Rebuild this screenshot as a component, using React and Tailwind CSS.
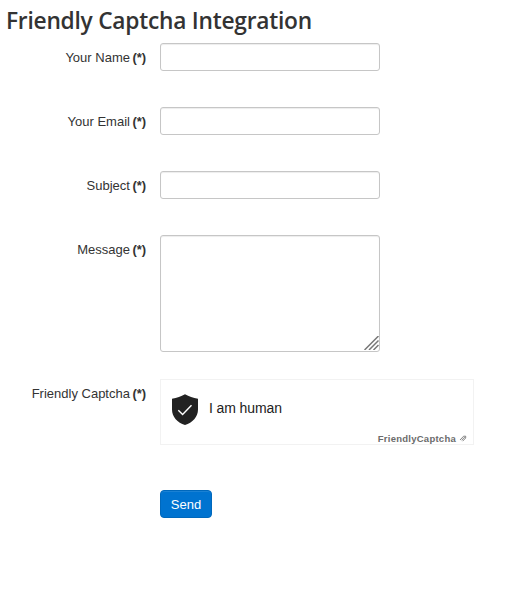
import { useState } from 'react';

const inputClass =
  'block w-[220px] rounded-[3px] border border-[#c6c6c6] bg-white px-1.5 text-[13px] text-[#555] shadow-[inset_0_1px_1px_rgba(0,0,0,0.075)] outline-none';

function Row({ label, htmlFor, className = '', children }) {
  return (
    <div className={`flex items-start ${className}`}>
      <label
        htmlFor={htmlFor}
        className="mr-3.5 w-[146px] shrink-0 pt-1.5 text-right text-[13px] leading-[18px] whitespace-nowrap"
      >
        {label} <strong className="-ml-px font-bold tracking-[-0.1px]">(*)</strong>
      </label>
      {children}
    </div>
  );
}

function ShieldIcon() {
  return (
    <svg width="26" height="31" viewBox="0 0 26 31" className="shrink-0">
      <path d="M13 0.300C17 2.400 21 3.800 26 4.800v10.700C26 23 20.500 28.800 13 31 5.500 28.800 0 23 0 15.500V4.800C5 3.800 9 2.400 13 0.300Z" fill="#222" />
      <path d="m6.300 16.300 4.300 4.300 8.900-9.400" fill="none" stroke="#fff" strokeWidth="1.400" />
    </svg>
  );
}

function LinkMark() {
  return (
    <svg width="8" height="7" viewBox="0 0 8 7" fill="none" stroke="#666" strokeWidth="0.800">
      <path d="M1 5 4.600 1.200H6.700V3L3.600 6.200M2.600 5.300 5.800 2" />
    </svg>
  );
}

function ResizeGrip() {
  return (
    <svg
      width="15"
      height="14"
      viewBox="0 0 15 14"
      className="pointer-events-none absolute right-[1px] bottom-[2px]"
      stroke="#777"
      strokeWidth="1.500"
    >
      <path d="M0.500 14 14.500 0M5 14 14.500 4.500M9.500 14 14.500 9" />
    </svg>
  );
}

export default function App() {
  const [form, setForm] = useState({ name: '', email: '', subject: '', message: '' });

  const update = (e) => setForm({ ...form, [e.target.name]: e.target.value });

  return (
    <form
      onSubmit={(e) => e.preventDefault()}
      className="min-h-screen bg-white font-['Liberation_Sans',Arial,sans-serif] text-[#333]"
    >
      <h1 className="h-[43px] pt-[3px] pl-1.5 font-['Open_Sans',sans-serif] text-[22.75px] leading-9 font-semibold tracking-[-0.25px] whitespace-nowrap">
        Friendly Captcha Integration
      </h1>

      <Row label="Your Name" htmlFor="name" className="mb-9">
        <input id="name" name="name" value={form.name} onChange={update} className={`${inputClass} h-7`} />
      </Row>
      <Row label="Your Email" htmlFor="email" className="mb-9">
        <input id="email" name="email" value={form.email} onChange={update} className={`${inputClass} h-7`} />
      </Row>
      <Row label="Subject" htmlFor="subject" className="mb-9">
        <input id="subject" name="subject" value={form.subject} onChange={update} className={`${inputClass} h-7`} />
      </Row>
      <Row label="Message" htmlFor="message" className="mb-[27px]">
        <div className="relative">
          <textarea
            id="message"
            name="message"
            value={form.message}
            onChange={update}
            className={`${inputClass} h-[117px] resize-none`}
          />
          <ResizeGrip />
        </div>
      </Row>

      {/* Captcha widget */}
      <Row label="Friendly Captcha" className="mb-[45px]">
        <div className="flex h-[66px] w-[314px] flex-col justify-between border border-[#f2f2f2] bg-white">
          <div className="flex items-center gap-[11px] pt-[14px] pl-[11px]">
            <ShieldIcon />
            <span className="-mt-[3px] text-[14px] leading-5 tracking-[-0.1px] text-[#222]">I am human</span>
          </div>
          <div className="flex items-center justify-end gap-[3px] pr-[6px] text-[9.5px] leading-[11px] font-bold tracking-[0.25px] text-[#6b6b6b]">
            <span>FriendlyCaptcha</span>
            <LinkMark />
          </div>
        </div>
      </Row>

      <button
        type="submit"
        className="ml-40 block h-7 w-[52px] rounded-[4px] border border-[#0068bc] bg-[#0073d0] pt-px text-[13px] leading-[18px] text-white shadow-[inset_0_1px_0_rgba(255,255,255,0.1)]"
      >
        Send
      </button>
    </form>
  );
}
